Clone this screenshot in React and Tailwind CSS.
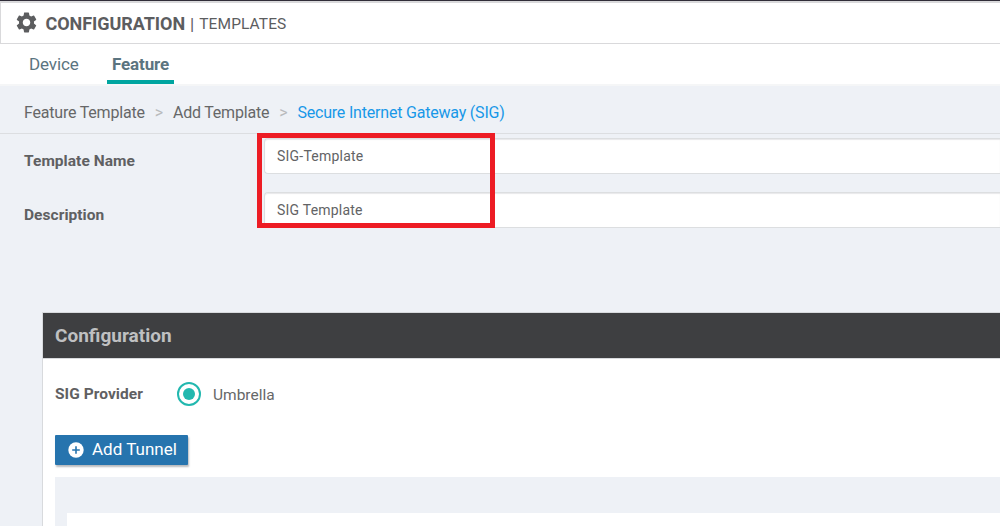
import { MdSettings } from "react-icons/md";

function Header() {
  return (
    <header className="flex h-[43px] shrink-0 items-center border-t-2 border-b border-l border-[#d9d9db] bg-white pl-[12.5px] text-[#5c5d5f]">
      <MdSettings className="size-[25px] -translate-y-px" />
      <h1 className="ml-[7px] pt-[2px] text-[18px] leading-5 font-bold tracking-[-0.05px]">CONFIGURATION</h1>
      <span className="ml-[5px] pt-px text-[17px] leading-5">|</span>
      <span className="ml-[5px] pt-[2px] text-[15.5px] leading-5 tracking-[0.1px]">TEMPLATES</span>
    </header>
  );
}

function Tabs() {
  return (
    <nav className="flex h-[42px] shrink-0 border-b-2 border-[#f5f6f7] bg-white pl-[24px] text-[17px] text-[#5b7480]">
      <a className="flex h-10 items-center px-[5px] pt-[2px] tracking-[-0.1px]">Device</a>
      <a className="ml-[23.3px] flex h-10 items-center border-b-4 border-[#00a5a0] px-[5px] pt-[5px] font-bold tracking-[-0.15px]">Feature</a>
    </nav>
  );
}

function Breadcrumbs() {
  return (
    <div className="flex h-12 shrink-0 items-center border-b border-[#dcdee1] pt-[7px] pl-6 text-[16px] tracking-[-0.2px] text-[#666768]">
      <span>Feature Template</span>
      <span className="mx-[10px] text-[16px] text-[#b9bbbd]">&gt;</span>
      <span>Add Template</span>
      <span className="mx-[10px] text-[16px] text-[#b9bbbd]">&gt;</span>
      <span className="text-[#1898e8]">Secure Internet Gateway (SIG)</span>
    </div>
  );
}

function Field({ label, value }) {
  return (
    <div className="flex h-9">
      <label className="w-60 pt-[13px] text-[15.5px] leading-5 font-bold tracking-[0.05px] text-[#5f6062]">{label}</label>
      <div className="flex flex-1 items-center rounded-l-sm border border-r-0 border-[#dcdee0] bg-white pl-3 text-[14px] tracking-[0.22px] text-[#626365] shadow-[inset_0_1px_1px_#e8e8ea]">
        {value}
      </div>
    </div>
  );
}

function PlusCircle() {
  return (
    <svg className="size-4" viewBox="0 0 16 16">
      <circle cx="8" cy="8" r="7.7" fill="white" />
      <path d="M8 4.2v7.6M4.2 8h7.6" stroke="#2674ae" strokeWidth="1.6" />
    </svg>
  );
}

export default function App() {
  return (
    <div className="relative flex h-[526px] w-[1000px] flex-col overflow-hidden border-t border-[#302d38] bg-[#eef1f6] font-[Roboto,sans-serif]">
      <Header />
      <Tabs />
      <Breadcrumbs />
      <form className="flex h-[178px] shrink-0 flex-col gap-[18px] pt-1 pl-6">
        <Field label="Template Name" value="SIG-Template" />
        <Field label="Description" value="SIG Template" />
      </form>
      <section className="ml-[42px] flex flex-1 flex-col border-t border-l border-[#d8dadd] bg-white">
        <h2 className="flex h-[46px] shrink-0 items-center border-b border-[#d8dadd] bg-[#3e3f41] pt-[2px] pl-3 text-[19px] font-bold text-[#bfc0c1]">
          Configuration
        </h2>
        <div className="flex h-[76px] shrink-0 items-center pb-[6px] pl-3">
          <span className="w-[122px] pt-px text-[15.5px] font-bold tracking-[0.05px] text-[#5f6062]">SIG Provider</span>
          <span className="flex size-6 items-center justify-center rounded-full border-2 border-[#22b8af]">
            <span className="size-3 rounded-full bg-[#22b8af]" />
          </span>
          <span className="ml-3 pt-[3px] text-[15.5px] text-[#666768]">Umbrella</span>
        </div>
        <button className="ml-3 flex h-[30px] w-[133px] shrink-0 items-center rounded-[1px] bg-[#2674ae] pl-[13px] text-[17px] text-white shadow-[1px_2px_2px_#b8babd]">
          <PlusCircle />
          <span className="ml-2 whitespace-nowrap">Add Tunnel</span>
        </button>
        <div className="mt-3 ml-3 flex flex-1 bg-[#eef1f6] pt-9 pl-3">
          <div className="flex-1 bg-white" />
        </div>
      </section>
      <div className="absolute top-[132px] left-[257px] h-[95px] w-[238px] border-5 border-[#ed1c24]" />
    </div>
  );
}
